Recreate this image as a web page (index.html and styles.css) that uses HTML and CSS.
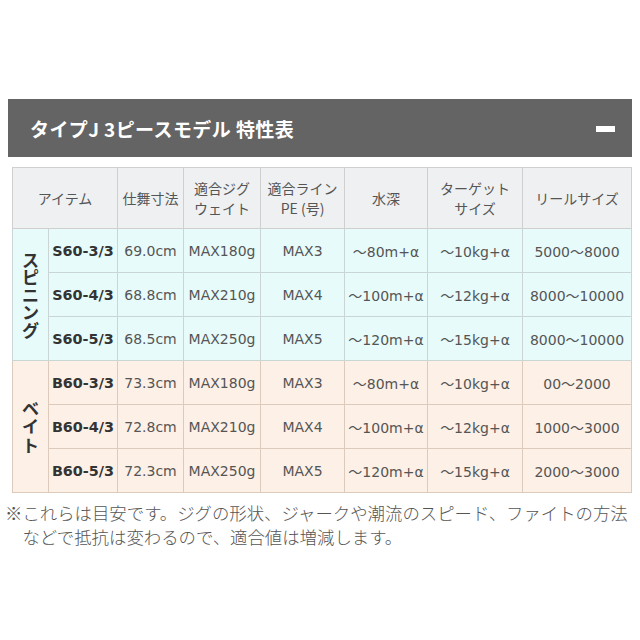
FILE: index.html
```html
<!DOCTYPE html>
<html lang="ja">
<head>
<meta charset="utf-8">
<title>タイプJ 3ピースモデル 特性表</title>
<link rel="stylesheet" href="styles.css">
</head>
<body>
<div class="page">
  <div class="panel-head">
    <h2 class="panel-title">タイプJ 3ピースモデル 特性表</h2>
    <span class="minus" aria-label="閉じる"></span>
  </div>
  <table class="spec">
    <colgroup>
      <col class="c-grp"><col class="c-model"><col class="c-len"><col class="c-jig"><col class="c-line"><col class="c-depth"><col class="c-target"><col class="c-reel">
    </colgroup>
    <thead>
      <tr>
        <th colspan="2">アイテム</th>
        <th>仕舞寸法</th>
        <th>適合ジグ<br>ウェイト</th>
        <th>適合ライン<br>PE (号)</th>
        <th>水深</th>
        <th>ターゲット<br>サイズ</th>
        <th>リールサイズ</th>
      </tr>
    </thead>
    <tbody class="spin">
      <tr>
        <th rowspan="3" class="grp"><span class="vlabel">スピニング</span></th>
        <td class="model">S60-3/3</td><td>69.0cm</td><td>MAX180g</td><td>MAX3</td><td>〜80m+α</td><td>〜10kg+α</td><td>5000〜8000</td>
      </tr>
      <tr>
        <td class="model">S60-4/3</td><td>68.8cm</td><td>MAX210g</td><td>MAX4</td><td>〜100m+α</td><td>〜12kg+α</td><td>8000〜10000</td>
      </tr>
      <tr>
        <td class="model">S60-5/3</td><td>68.5cm</td><td>MAX250g</td><td>MAX5</td><td>〜120m+α</td><td>〜15kg+α</td><td>8000〜10000</td>
      </tr>
    </tbody>
    <tbody class="bait">
      <tr>
        <th rowspan="3" class="grp"><span class="vlabel">ベイト</span></th>
        <td class="model">B60-3/3</td><td>73.3cm</td><td>MAX180g</td><td>MAX3</td><td>〜80m+α</td><td>〜10kg+α</td><td>00〜2000</td>
      </tr>
      <tr>
        <td class="model">B60-4/3</td><td>72.8cm</td><td>MAX210g</td><td>MAX4</td><td>〜100m+α</td><td>〜12kg+α</td><td>1000〜3000</td>
      </tr>
      <tr>
        <td class="model">B60-5/3</td><td>72.3cm</td><td>MAX250g</td><td>MAX5</td><td>〜120m+α</td><td>〜15kg+α</td><td>2000〜3000</td>
      </tr>
    </tbody>
  </table>
  <p class="note">※これらは目安です。ジグの形状、ジャークや潮流のスピード、ファイトの方法などで抵抗は変わるので、適合値は増減します。</p>
</div>
</body>
</html>
```

FILE: styles.css
```css
html, body {
  margin: 0;
  padding: 0;
  background: #ffffff;
}

.page {
  padding: 99px 8px 0 8px;
  font-family: "Noto Sans CJK JP", "DejaVu Sans", sans-serif;
}

.panel-head {
  height: 58px;
  background: #646464;
  display: flex;
  align-items: center;
  justify-content: space-between;
  padding: 0 17px 0 22px;
  box-sizing: border-box;
}

.panel-title {
  margin: 0;
  color: #ffffff;
  font-size: 19px;
  font-weight: 700;
  line-height: 1;
  letter-spacing: 0.4px;
}

.minus {
  display: block;
  width: 19px;
  height: 6px;
  background: #ffffff;
  margin-top: 1px;
}

.spec {
  margin: 10px 1px 0 4px;
  width: 619px;
  table-layout: fixed;
  border-collapse: collapse;
  font-family: "DejaVu Sans", "Noto Sans CJK JP", sans-serif;
  font-size: 14px;
  color: #555555;
}

.c-grp { width: 36px; }
.c-model { width: 69px; }
.c-len { width: 66px; }
.c-jig { width: 77px; }
.c-line { width: 84px; }
.c-depth { width: 83px; }
.c-target { width: 95px; }
.c-reel { width: 109px; }

.spec th,
.spec td {
  border: 1px solid #cfcfcf;
  padding: 0;
  text-align: center;
  vertical-align: middle;
  white-space: nowrap;
}

.spec thead th {
  height: 60px;
  background: #eef0f2;
  font-weight: 400;
  line-height: 20px;
  color: #555555;
  font-family: "Noto Sans CJK JP", "DejaVu Sans", sans-serif;
}

.spec tbody td {
  height: 43px;
}

.spin td,
.spin th {
  background: #e7fbfb;
  border-color: #cad6d6;
}

.bait td,
.bait th {
  background: #fdf0e6;
  border-color: #dccbbd;
}

.spec .model {
  font-weight: 700;
  color: #333333;
  font-size: 14.4px;
  letter-spacing: 0;
}

.spec .grp {
  white-space: normal;
}

.vlabel {
  display: block;
  width: 18px;
  margin: 0 auto;
  font-family: "Noto Sans CJK JP", sans-serif;
  font-size: 17px;
  font-weight: 700;
  line-height: 17.5px;
  color: #333333;
  white-space: normal;
  word-break: break-all;
}

.bait .vlabel {
  line-height: 18.5px;
}

.note {
  margin: 8px 0 0 -3px;
  padding-left: 17.4px;
  text-indent: -17.4px;
  font-size: 17.4px;
  line-height: 24px;
  color: #555555;
  font-weight: 300;
}
```
